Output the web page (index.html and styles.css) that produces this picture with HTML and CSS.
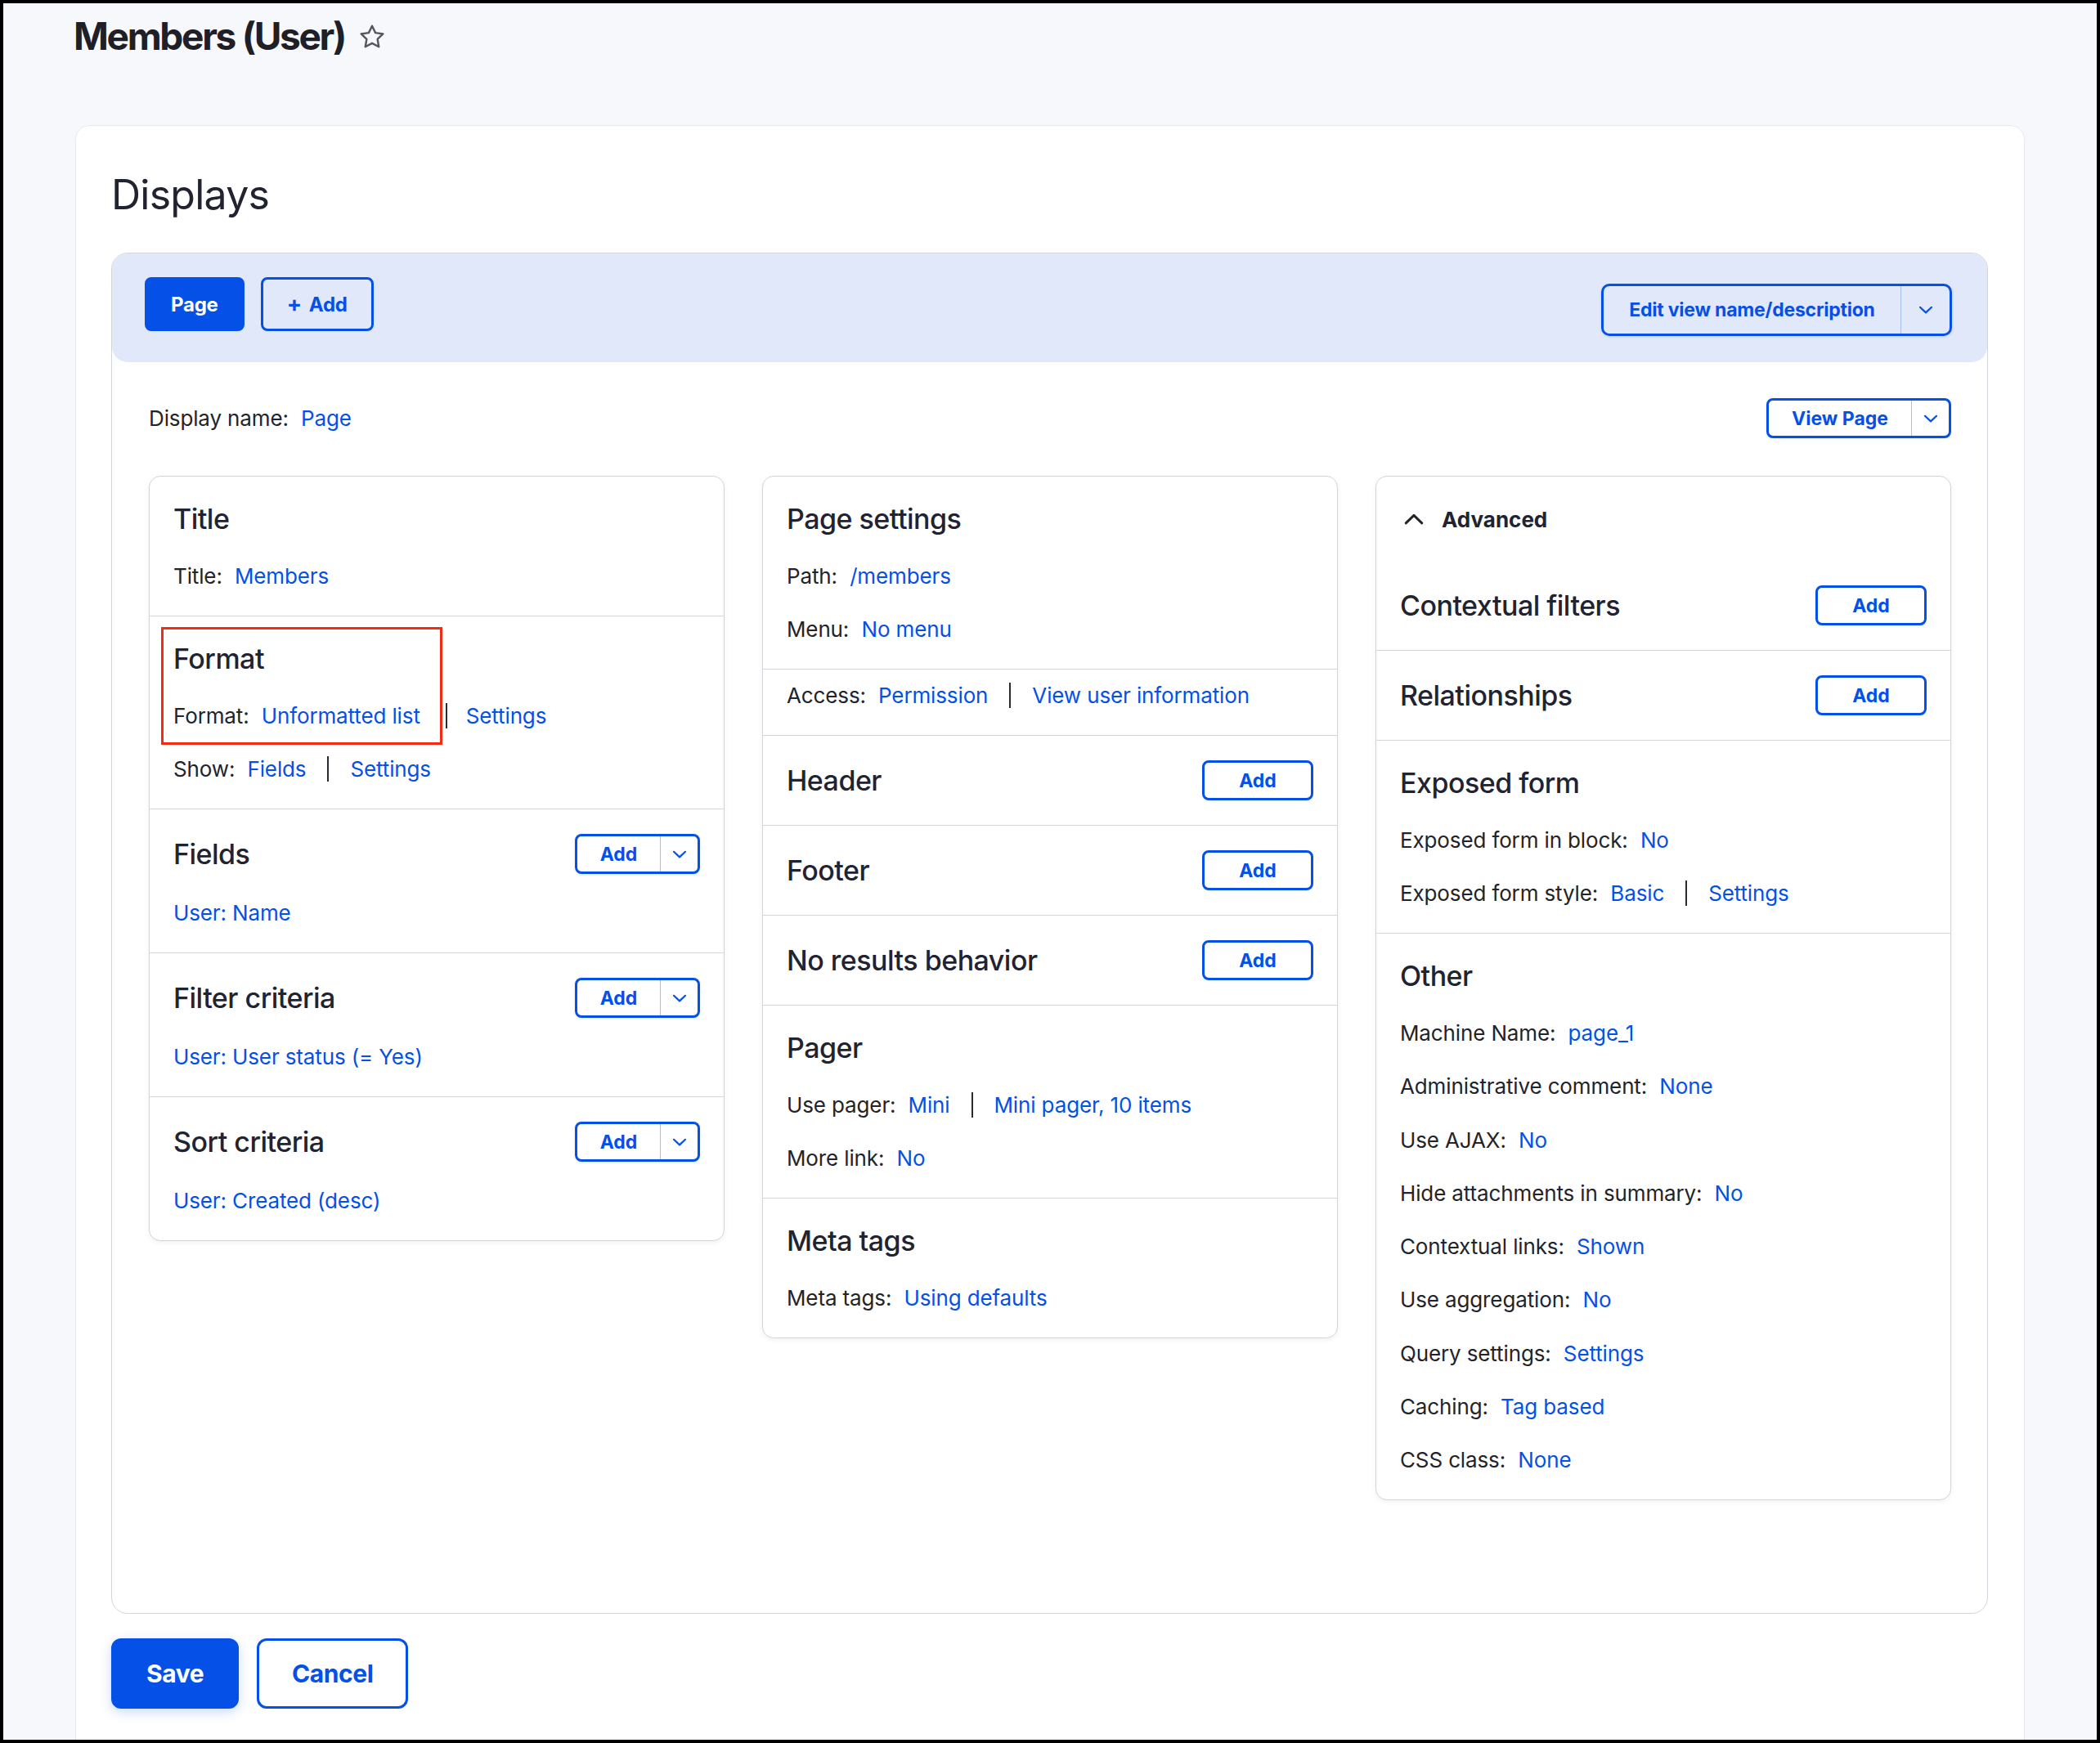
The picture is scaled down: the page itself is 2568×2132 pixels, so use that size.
FILE: index.html
```html
<!DOCTYPE html>
<html lang="en">
<head>
<meta charset="utf-8">
<title>Members (User)</title>
<link rel="stylesheet" href="styles.css">
</head>
<body>
<div class="frame">
  <header class="page-head">
    <h1 class="page-title">Members (User)</h1>
    <svg class="star" width="34" height="34" viewBox="0 0 24 24" aria-hidden="true"><path d="M12 2.6l2.9 5.95 6.55.95-4.75 4.6 1.12 6.52L12 17.55l-5.82 3.07 1.12-6.52L2.55 9.5l6.55-.95z" fill="none" stroke="#55565e" stroke-width="1.7" stroke-linejoin="round"/></svg>
  </header>

  <main class="card">
    <h2 class="displays-title">Displays</h2>

    <div class="displays-box">
      <div class="tabs-bar">
        <div class="tabs">
          <a class="btn btn-lg btn-primary">Page</a>
          <a class="btn btn-lg btn-outline"><span class="plus">+</span>Add</a>
        </div>
        <div class="split split-lg">
          <span class="split-main">Edit view name/description</span>
          <span class="split-toggle"><svg width="18" height="10" viewBox="0 0 18 10"><path d="M2 1.8L9 8.4l7-6.6" fill="none" stroke="currentColor" stroke-width="2.2" stroke-linecap="round" stroke-linejoin="round"/></svg></span>
        </div>
      </div>

      <div class="display-body">
        <div class="display-name-row">
          <div class="line"><span class="label">Display name:</span> <a>Page</a></div>
          <div class="split split-sm">
            <span class="split-main">View Page</span>
            <span class="split-toggle"><svg width="18" height="10" viewBox="0 0 18 10"><path d="M2 1.8L9 8.4l7-6.6" fill="none" stroke="currentColor" stroke-width="2.2" stroke-linecap="round" stroke-linejoin="round"/></svg></span>
          </div>
        </div>

        <div class="columns">
          <!-- Column 1 -->
          <div class="col">
            <section class="sec">
              <div class="sec-head"><h3>Title</h3></div>
              <div class="line"><span class="label">Title:</span> <a>Members</a></div>
            </section>
            <section class="sec sec-format">
              <div class="sec-head"><h3>Format</h3></div>
              <div class="line line-format"><span class="label">Format:</span> <a>Unformatted list</a><span class="sep"></span><a>Settings</a></div>
              <div class="line"><span class="label">Show:</span> <a>Fields</a><span class="sep"></span><a>Settings</a></div>
              <div class="highlight"></div>
            </section>
            <section class="sec">
              <div class="sec-head"><h3>Fields</h3>
                <div class="split split-sm split-add">
                  <span class="split-main">Add</span>
                  <span class="split-toggle"><svg width="18" height="10" viewBox="0 0 18 10"><path d="M2 1.8L9 8.4l7-6.6" fill="none" stroke="currentColor" stroke-width="2.2" stroke-linecap="round" stroke-linejoin="round"/></svg></span>
                </div>
              </div>
              <div class="line"><a>User: Name</a></div>
            </section>
            <section class="sec">
              <div class="sec-head"><h3>Filter criteria</h3>
                <div class="split split-sm split-add">
                  <span class="split-main">Add</span>
                  <span class="split-toggle"><svg width="18" height="10" viewBox="0 0 18 10"><path d="M2 1.8L9 8.4l7-6.6" fill="none" stroke="currentColor" stroke-width="2.2" stroke-linecap="round" stroke-linejoin="round"/></svg></span>
                </div>
              </div>
              <div class="line"><a>User: User status (= Yes)</a></div>
            </section>
            <section class="sec">
              <div class="sec-head"><h3>Sort criteria</h3>
                <div class="split split-sm split-add">
                  <span class="split-main">Add</span>
                  <span class="split-toggle"><svg width="18" height="10" viewBox="0 0 18 10"><path d="M2 1.8L9 8.4l7-6.6" fill="none" stroke="currentColor" stroke-width="2.2" stroke-linecap="round" stroke-linejoin="round"/></svg></span>
                </div>
              </div>
              <div class="line"><a>User: Created (desc)</a></div>
            </section>
          </div>

          <!-- Column 2 -->
          <div class="col">
            <section class="sec">
              <div class="sec-head"><h3>Page settings</h3></div>
              <div class="line"><span class="label">Path:</span> <a>/members</a></div>
              <div class="line"><span class="label">Menu:</span> <a>No menu</a></div>
            </section>
            <section class="sec sec-access">
              <div class="line"><span class="label">Access:</span> <a>Permission</a><span class="sep"></span><a>View user information</a></div>
            </section>
            <section class="sec sec-row">
              <div class="sec-head"><h3>Header</h3><a class="btn btn-sm btn-outline btn-add">Add</a></div>
            </section>
            <section class="sec sec-row">
              <div class="sec-head"><h3>Footer</h3><a class="btn btn-sm btn-outline btn-add">Add</a></div>
            </section>
            <section class="sec sec-row">
              <div class="sec-head"><h3>No results behavior</h3><a class="btn btn-sm btn-outline btn-add">Add</a></div>
            </section>
            <section class="sec">
              <div class="sec-head"><h3>Pager</h3></div>
              <div class="line"><span class="label">Use pager:</span> <a>Mini</a><span class="sep"></span><a>Mini pager, 10 items</a></div>
              <div class="line"><span class="label">More link:</span> <a>No</a></div>
            </section>
            <section class="sec">
              <div class="sec-head"><h3>Meta tags</h3></div>
              <div class="line"><span class="label">Meta tags:</span> <a>Using defaults</a></div>
            </section>
          </div>

          <!-- Column 3 -->
          <div class="col">
            <div class="adv-head">
              <svg width="24" height="14" viewBox="0 0 24 14"><path d="M2.2 11.8L12 2.4l9.8 9.4" fill="none" stroke="#232429" stroke-width="3" stroke-linecap="round" stroke-linejoin="round"/></svg>
              <span>Advanced</span>
            </div>
            <section class="sec sec-row">
              <div class="sec-head"><h3>Contextual filters</h3><a class="btn btn-sm btn-outline btn-add">Add</a></div>
            </section>
            <section class="sec sec-row">
              <div class="sec-head"><h3>Relationships</h3><a class="btn btn-sm btn-outline btn-add">Add</a></div>
            </section>
            <section class="sec">
              <div class="sec-head"><h3>Exposed form</h3></div>
              <div class="line"><span class="label">Exposed form in block:</span> <a>No</a></div>
              <div class="line"><span class="label">Exposed form style:</span> <a>Basic</a><span class="sep"></span><a>Settings</a></div>
            </section>
            <section class="sec sec-other">
              <div class="sec-head"><h3>Other</h3></div>
              <div class="line"><span class="label">Machine Name:</span> <a>page_1</a></div>
              <div class="line"><span class="label">Administrative comment:</span> <a>None</a></div>
              <div class="line"><span class="label">Use AJAX:</span> <a>No</a></div>
              <div class="line"><span class="label">Hide attachments in summary:</span> <a>No</a></div>
              <div class="line"><span class="label">Contextual links:</span> <a>Shown</a></div>
              <div class="line"><span class="label">Use aggregation:</span> <a>No</a></div>
              <div class="line"><span class="label">Query settings:</span> <a>Settings</a></div>
              <div class="line"><span class="label">Caching:</span> <a>Tag based</a></div>
              <div class="line"><span class="label">CSS class:</span> <a>None</a></div>
            </section>
          </div>
        </div>
      </div>
    </div>

    <div class="actions">
      <a class="btn btn-xl btn-primary btn-shadow">Save</a>
      <a class="btn btn-xl btn-outline">Cancel</a>
    </div>
  </main>
</div>
</body>
</html>
```

FILE: styles.css
```css
* { box-sizing: border-box; }

html, body {
  margin: 0;
  padding: 0;
  background: #000;
}

body {
  font-family: Inter, "Noto Sans", "Liberation Sans", sans-serif;
  color: #232429;
}

a {
  color: #0550e6;
  text-decoration: none;
  cursor: pointer;
}

.frame {
  width: 2568px;
  height: 2132px;
  border: 4px solid #000;
  background: #f7f8fc;
  overflow: hidden;
}

/* ---------- Page header ---------- */
.page-head {
  display: flex;
  align-items: center;
  padding: 11px 0 0 86px;
}

.page-title {
  margin: 0;
  font-size: 46px;
  line-height: 58px;
  font-weight: 700;
  letter-spacing: -0.05em;
  color: #1f2027;
}

.star {
  margin-left: 16px;
  margin-top: 2px;
}

/* ---------- Card ---------- */
.card {
  margin: 80px 88px 0 88px;
  background: #fff;
  border: 1px solid #e8e9ef;
  border-radius: 18px;
  padding: 54px 44px 80px 43px;
  min-height: 2100px;
}

.displays-title {
  margin: 0 0 41px 0;
  font-size: 50px;
  line-height: 60px;
  font-weight: 400;
  letter-spacing: -0.015em;
  color: #222330;
}

.displays-box {
  border: 1px solid #d4d5da;
  border-radius: 20px;
}

.tabs-bar {
  display: flex;
  justify-content: space-between;
  align-items: flex-start;
  background: #e0e8f9;
  border-radius: 19px;
  height: 133px;
  padding: 29px 43px 0 40px;
}

.tabs {
  display: flex;
  gap: 20px;
}

/* ---------- Buttons ---------- */
.btn {
  display: inline-flex;
  align-items: center;
  justify-content: center;
  font-weight: 700;
  border: 3px solid #0550e6;
  white-space: nowrap;
}

.btn-primary {
  background: #0550e6;
  color: #fff;
}

.btn-outline {
  background: #fff;
  color: #0550e6;
}

.tabs .btn-outline {
  background: transparent;
}

.btn-lg {
  height: 66px;
  padding: 0 29px;
  font-size: 24px;
  border-radius: 8px;
  letter-spacing: -0.01em;
}

.plus {
  font-size: 27px;
  margin-right: 9px;
  margin-top: -2px;
}

.btn-sm {
  height: 49px;
  font-size: 23px;
  border-radius: 8px;
}

.btn-add {
  width: 136px;
}

.btn-xl {
  height: 86px;
  padding: 0 40px;
  font-size: 30px;
  border-radius: 12px;
  letter-spacing: -0.015em;
}

.btn-shadow {
  box-shadow: 0 4px 14px rgba(5, 80, 230, 0.22);
}

.split {
  display: inline-flex;
  align-items: stretch;
  border: 3px solid #0550e6;
  border-radius: 8px;
  color: #0550e6;
  font-weight: 700;
  white-space: nowrap;
  box-shadow: 0 1px 3px rgba(5, 80, 230, 0.12);
}

.split-main {
  display: flex;
  align-items: center;
  justify-content: center;
}

.split-toggle {
  display: flex;
  align-items: center;
  justify-content: center;
  border-left: 1px solid #a9c0f2;
}

.split-lg {
  height: 64px;
  margin-top: 8px;
  font-size: 23px;
  border-radius: 10px;
  letter-spacing: -0.01em;
}

.split-lg .split-main {
  width: 363px;
}

.split-lg .split-toggle {
  width: 60px;
}

.split-sm {
  height: 49px;
  font-size: 23px;
  background: #fff;
}

.split-sm .split-main {
  padding: 0 28px;
}

.split-sm .split-toggle {
  width: 46px;
}

.split-add .split-main {
  width: 101px;
  padding: 0;
}

/* ---------- Display body ---------- */
.display-body {
  padding: 44px 44px 138px 45px;
}

.display-name-row {
  display: flex;
  justify-content: space-between;
  align-items: center;
  height: 49px;
  margin-bottom: 46px;
}

.line {
  font-size: 26px;
  line-height: 36px;
  white-space: nowrap;
  letter-spacing: -0.005em;
}

.line + .line {
  margin-top: 29px;
}

.sec-other .line + .line {
  margin-top: 29.3px;
}

.label {
  margin-right: 8px;
  color: #232429;
}

.sep {
  display: inline-block;
  width: 2px;
  height: 31px;
  background: #2a2b31;
  margin: 0 26px;
  vertical-align: -6px;
}

.line-format .sep {
  margin-left: 31px;
  margin-right: 23px;
}

.columns {
  display: grid;
  grid-template-columns: repeat(3, 1fr);
  gap: 46px;
  align-items: start;
}

.col {
  background: #fff;
  border: 1px solid #d4d5da;
  border-radius: 14px;
  box-shadow: 0 2px 6px rgba(20, 20, 40, 0.06);
}

.sec {
  position: relative;
  padding: 30px 29px;
}

.sec + .sec {
  border-top: 1px solid #d4d5da;
}

.sec-head {
  display: flex;
  justify-content: space-between;
  align-items: center;
  min-height: 44px;
  margin-bottom: 30px;
}

.sec-row .sec-head {
  margin-bottom: 0;
}

.sec-head h3 {
  margin: 0;
  font-size: 34px;
  line-height: 40px;
  font-weight: 500;
  letter-spacing: -0.015em;
  color: #222330;
}

.sec-access {
  padding-top: 14px;
}

.highlight {
  position: absolute;
  top: 13px;
  left: 14px;
  width: 344px;
  height: 144px;
  border: 3px solid #f22b12;
  pointer-events: none;
}

.adv-head {
  display: flex;
  align-items: center;
  gap: 22px;
  height: 103px;
  padding: 30px 29px 29px 34px;
  font-size: 26px;
  font-weight: 700;
  color: #222330;
}

/* ---------- Actions ---------- */
.actions {
  display: flex;
  gap: 22px;
  margin-top: 30px;
}
```
